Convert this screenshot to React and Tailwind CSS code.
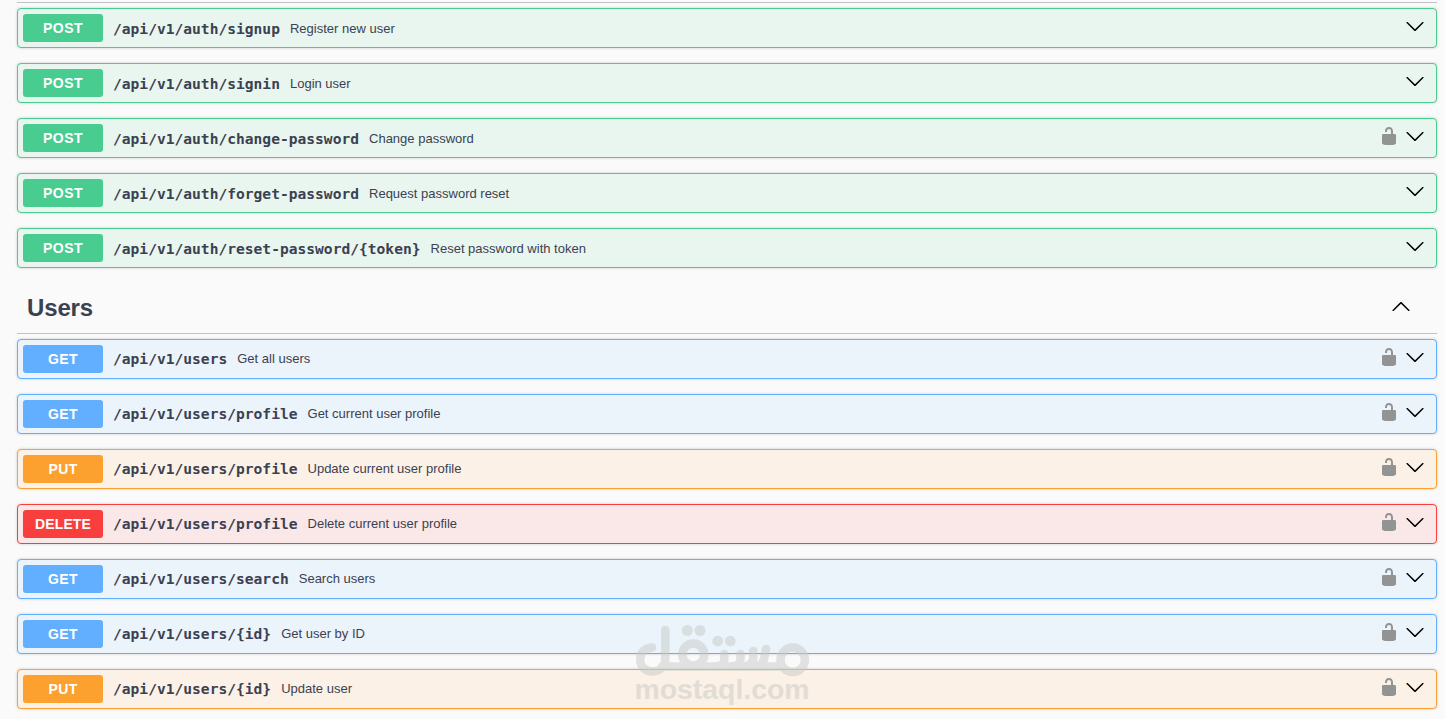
import React from 'react';

const authRoutes = [
  { method: 'POST', path: '/api/v1/auth/signup', summary: 'Register new user' },
  { method: 'POST', path: '/api/v1/auth/signin', summary: 'Login user' },
  { method: 'POST', path: '/api/v1/auth/change-password', summary: 'Change password', locked: true },
  { method: 'POST', path: '/api/v1/auth/forget-password', summary: 'Request password reset' },
  { method: 'POST', path: '/api/v1/auth/reset-password/{token}', summary: 'Reset password with token' },
];

const userRoutes = [
  { method: 'GET', path: '/api/v1/users', summary: 'Get all users', locked: true },
  { method: 'GET', path: '/api/v1/users/profile', summary: 'Get current user profile', locked: true },
  { method: 'PUT', path: '/api/v1/users/profile', summary: 'Update current user profile', locked: true },
  { method: 'DELETE', path: '/api/v1/users/profile', summary: 'Delete current user profile', locked: true },
  { method: 'GET', path: '/api/v1/users/search', summary: 'Search users', locked: true },
  { method: 'GET', path: '/api/v1/users/{id}', summary: 'Get user by ID', locked: true },
  { method: 'PUT', path: '/api/v1/users/{id}', summary: 'Update user', locked: true },
];

const styles = {
  POST: { row: 'border-[#49cc90] bg-[#e8f6ef]', badge: 'bg-[#49cc90] tracking-[0.5px]' },
  GET: { row: 'border-[#61affe] bg-[#ebf3fb]', badge: 'bg-[#61affe] tracking-[0.4px]' },
  PUT: { row: 'border-[#fca130] bg-[#fbf1e6]', badge: 'bg-[#fca130] tracking-[0.4px]' },
  DELETE: { row: 'border-[#f93e3e] bg-[#fae7e7]', badge: 'bg-[#f93e3e] tracking-[0.1px]' },
};

const LockIcon = () => (
  <svg viewBox="0 0 20 20" className="w-5 h-5 fill-[#929493]">
    <path d="M15.8 8H14V5.6C14 2.703 12.665 1 10 1 7.334 1 6 2.703 6 5.6V6h2v-.801C8 3.754 8.797 3 10 3c1.203 0 2 .754 2 2.199V8H4c-.553 0-1 .646-1 1.199V17c0 .549.428 1.139.951 1.307l1.197.387C5.672 18.861 6.55 19 7.1 19h5.8c.549 0 1.428-.139 1.951-.307l1.196-.387c.524-.167.953-.757.953-1.306V9.199C17 8.646 16.352 8 15.8 8z" />
  </svg>
);

const ArrowDown = () => (
  <svg viewBox="0 0 20 20" className="w-5 h-5 fill-black">
    <path d="M17.418 6.109c.272-.268.709-.268.979 0s.271.701 0 .969l-7.908 7.83c-.27.268-.707.268-.979 0l-7.908-7.83c-.27-.268-.27-.701 0-.969.271-.268.709-.268.979 0L10 13.25l7.418-7.141z" />
  </svg>
);

const ArrowUp = () => (
  <svg viewBox="0 0 20 20" className="w-5 h-5 fill-black">
    <path d="M17.418 14.908c.272.27.709.27.979 0s.271-.697 0-.969l-7.908-7.83c-.27-.268-.707-.268-.979 0l-7.908 7.83c-.27.271-.27.697 0 .969.271.27.709.27.979 0L10 7.767l7.418 7.141z" />
  </svg>
);

const Operation = ({ method, path, summary, locked, textClass = '' }) => (
  <div
    className={`flex items-center h-10 pl-[5px] pr-[11px] rounded-[4px] border shadow-[0_0_3px_rgba(0,0,0,0.19)] ${styles[method].row}`}
  >
    <span className={`w-20 h-7 rounded-[3px] text-center text-sm leading-7 font-bold text-white ${styles[method].badge}`}>
      {method}
    </span>
    <div className={`flex items-center gap-2.5 pl-2.5 whitespace-nowrap ${textClass}`}>
      <span className="font-['DejaVu_Sans_Mono',monospace] text-[14.6px] leading-5 font-bold">{path}</span>
      <span className="text-[13px] leading-5">{summary}</span>
    </div>
    <div className="ml-auto mb-1 flex items-center gap-1.5">
      {locked && <LockIcon />}
      <ArrowDown />
    </div>
  </div>
);

const Watermark = () => (
  <svg viewBox="0 0 190 90" className="absolute left-[630px] top-[620px] w-[190px] h-[90px] opacity-50">
    <g fill="none" stroke="#c8cac8" strokeWidth="8.5" strokeLinecap="round">
      <path d="M22 27.5C14.500 28 10.200 33 10.200 39.500C10.200 46.500 15.500 51.500 22.500 51.500C30 51.500 35.300 46.500 35.300 39V10" />
      <path d="M32 46.500H150" />
      <circle cx="63.300" cy="34.500" r="11" />
      <circle cx="162.700" cy="39.800" r="12.200" />
      <path d="M94.300 34V40Q94 46 88 46" />
      <path d="M110.500 34V39Q110 46 104 46" />
      <path d="M123.300 31V38Q122 46 115 46" />
      <path d="M136 29L134 39Q132 46 126 46" />
    </g>
    <g fill="#c8cac8">
      <circle cx="57.300" cy="10.500" r="5.500" />
      <circle cx="70" cy="10.500" r="5.500" />
      <circle cx="87.700" cy="21" r="5.300" />
      <circle cx="100.300" cy="21" r="5.300" />
      <text x="4.500" y="78.500" textLength="175" lengthAdjust="spacingAndGlyphs" className="font-['Liberation_Sans',sans-serif] text-[28px] font-bold">
        mostaql.com
      </text>
    </g>
  </svg>
);

export default function App() {
  return (
    <div className="relative h-[719px] overflow-hidden bg-[#fafafa] pl-[17px] pr-2 pt-0.5 font-['Liberation_Sans',Arial,sans-serif] text-[#3b4151]">
      <div className="border-t border-[#c1c2c8] pt-[5px] flex flex-col gap-[15px]">
        {authRoutes.map((route) => (
          <Operation key={route.path} textClass="pt-0.5" {...route} />
        ))}
      </div>

      <div className="mt-[15px] h-[51px] flex items-center justify-between pl-2.5 pr-[26px] border-b border-[#c1c2c4]">
        <h3 className="text-2xl font-bold tracking-[-0.15px]">Users</h3>
        <div className="mb-1">
          <ArrowUp />
        </div>
      </div>

      <div className="pt-[5px] flex flex-col gap-[15px]">
        {userRoutes.map((route) => (
          <Operation key={route.method + route.path} {...route} />
        ))}
      </div>

      <Watermark />
    </div>
  );
}
